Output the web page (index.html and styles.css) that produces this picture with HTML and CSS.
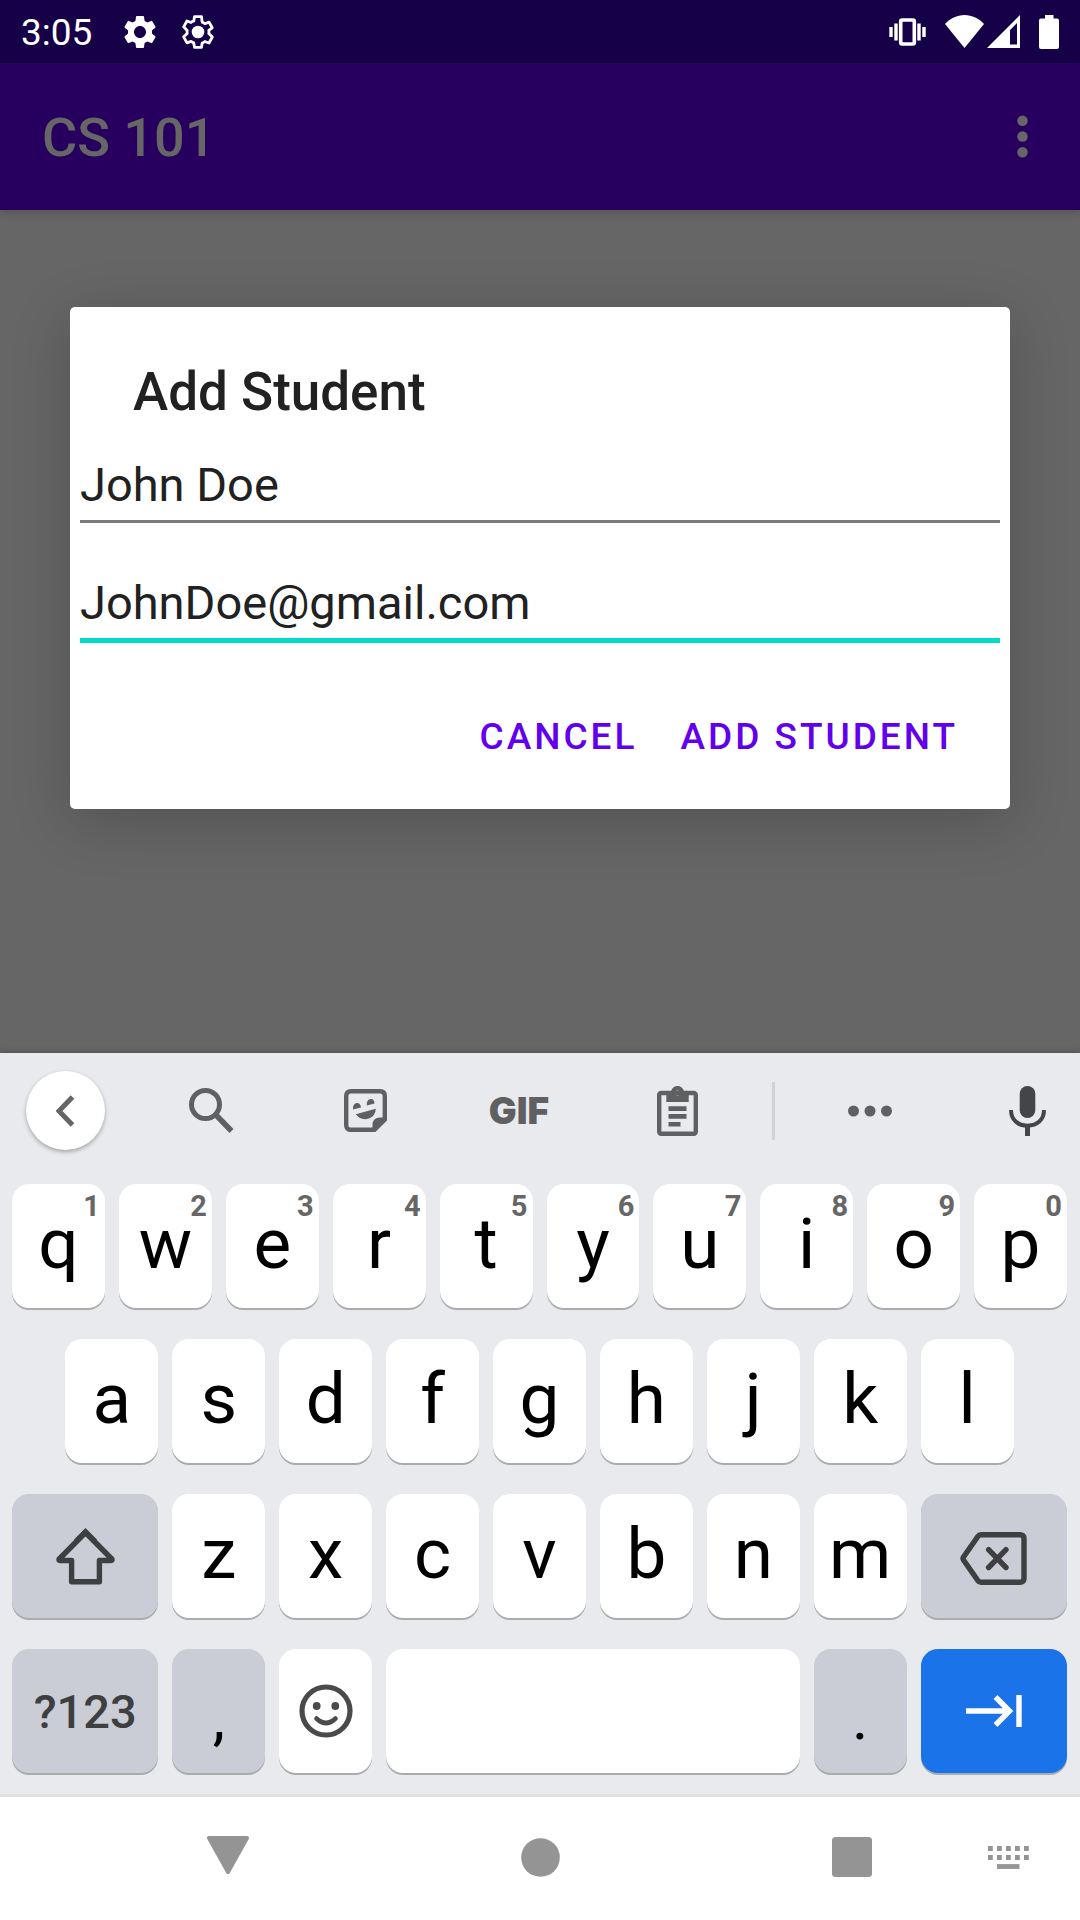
FILE: index.html
```html
<!DOCTYPE html>
<html lang="en">
<head>
<meta charset="utf-8">
<meta name="viewport" content="width=device-width, initial-scale=1">
<title>CS 101</title>
<link rel="stylesheet" href="styles.css">
</head>
<body>
<div class="status-bar">
  <span class="clock">3:05</span>
  <div class="notifications">
    <svg width="40" height="40" viewBox="0 0 24 24" aria-hidden="true"><path fill="#fff" d="M19.14,12.94c0.04-0.3,0.06-0.61,0.06-0.94c0-0.32-0.02-0.64-0.07-0.94l2.03-1.58c0.18-0.14,0.23-0.41,0.12-0.61l-1.92-3.32c-0.12-0.22-0.37-0.29-0.59-0.22l-2.39,0.96c-0.5-0.38-1.03-0.7-1.62-0.94L14.4,2.81c-0.04-0.24-0.24-0.41-0.48-0.41h-3.84c-0.24,0-0.43,0.17-0.47,0.41L9.25,5.35C8.66,5.59,8.12,5.92,7.63,6.29L5.24,5.33c-0.22-0.08-0.47,0-0.59,0.22L2.74,8.87C2.62,9.08,2.66,9.34,2.86,9.48l2.03,1.58C4.84,11.36,4.8,11.69,4.8,12s0.02,0.64,0.07,0.94l-2.03,1.58c-0.18,0.14-0.23,0.41-0.12,0.61l1.92,3.32c0.12,0.22,0.37,0.29,0.59,0.22l2.39-0.96c0.5,0.38,1.03,0.7,1.62,0.94l0.36,2.54c0.05,0.24,0.24,0.41,0.48,0.41h3.84c0.24,0,0.44-0.17,0.47-0.41l0.36-2.54c0.59-0.24,1.13-0.56,1.62-0.94l2.39,0.96c0.22,0.08,0.47,0,0.59-0.22l1.92-3.32c0.12-0.22,0.07-0.47-0.12-0.61L19.14,12.94z M12,15.6c-1.98,0-3.6-1.62-3.6-3.6s1.62-3.6,3.6-3.6s3.6,1.62,3.6,3.6S13.98,15.6,12,15.6z"/></svg>
    <svg width="40" height="40" viewBox="0 0 24 24" aria-hidden="true"><path fill="none" stroke="#fff" stroke-width="1.7" stroke-linejoin="round" d="M18.5,12.94c0.04-0.3,0.06-0.61,0.06-0.94c0-0.32-0.02-0.64-0.07-0.94l2.03-1.58l-1.9-3.4l-2.5,0.96c-0.5-0.38-1.03-0.7-1.62-0.94L14.1,2.8h-4.2L9.45,5.35C8.86,5.59,8.32,5.92,7.83,6.29L5.4,5.4L3.4,8.9l2.1,2.16C5.46,11.36,5.44,11.69,5.44,12s0.02,0.64,0.07,0.94L3.4,14.9l2,3.6l2.43-0.9c0.5,0.38,1.03,0.7,1.62,0.94L9.9,21.2h4.2l0.4-2.56c0.59-0.24,1.13-0.56,1.62-0.94l2.48,0.9l2-3.6z"/><circle cx="12" cy="12" r="3.8" fill="#fff"/></svg>
  </div>
  <div class="system-icons">
    <svg class="vibrate" width="37" height="28" viewBox="0 0 37 28" aria-hidden="true"><rect x="11.7" y="2" width="13.6" height="24" rx="1.5" fill="none" stroke="#fff" stroke-width="3.6"/><path d="M2 9v10M7 5.500v17M30 5.500v17M35 9v10" stroke="#fff" stroke-width="3.4"/></svg>
    <svg class="wifi" width="39" height="33" viewBox="0 0 39 33" aria-hidden="true"><path fill="#fff" d="M19.500 33L0 9C5 3.500 12 0 19.500 0S34 3.500 39 9z"/></svg>
    <svg class="signal" width="33" height="33" viewBox="0 0 33 33" aria-hidden="true"><path fill="#fff" fill-rule="evenodd" d="M33 0V33H0zM30 8L23 15V29.500H30z"/></svg>
    <svg width="20" height="34" viewBox="0 0 20 34" aria-hidden="true"><path fill="#fff" d="M6 0H14.500V3.500H18Q20 3.500 20 5.500V32Q20 34 18 34H2Q0 34 0 32V5.500Q0 3.500 2 3.500H6z"/></svg>
  </div>
</div>

<header class="app-bar">
  <h1 class="app-title">CS 101</h1>
  <button class="icon-button" type="button" aria-label="More options">
    <svg width="63" height="63" viewBox="0 0 24 24"><g fill="#666"><circle cx="12" cy="6" r="2"/><circle cx="12" cy="12" r="2"/><circle cx="12" cy="18" r="2"/></g></svg>
  </button>
</header>

<main class="screen">
  <form class="dialog" role="dialog" aria-labelledby="dialog-title">
    <h2 class="dialog-title" id="dialog-title">Add Student</h2>
    <div class="fields">
      <input class="field" type="text" aria-label="Name" value="John Doe">
      <input class="field field-active" type="text" aria-label="Email" value="JohnDoe@gmail.com">
    </div>
    <div class="actions">
      <button class="action" type="button">CANCEL</button>
      <button class="action" type="button">ADD STUDENT</button>
    </div>
  </form>
</main>

<section class="keyboard" aria-label="Keyboard">
  <div class="toolbar">
    <button class="tool tool-round" type="button" aria-label="Back"><svg width="19" height="32" viewBox="0 0 19 32"><path d="M16.500 2L3 16L16.500 30" fill="none" stroke="#666" stroke-width="5"/></svg></button>
    <button class="tool" type="button" aria-label="Search"><svg width="45" height="45" viewBox="0 0 45 45"><circle cx="16.500" cy="16.500" r="14" fill="none" stroke="#5f6062" stroke-width="5"/><path d="M27 27L42.500 43" stroke="#5f6062" stroke-width="5.500"/></svg></button>
    <button class="tool" type="button" aria-label="Stickers"><svg width="43" height="43" viewBox="0 0 43 43"><path d="M7 2.200H36Q40.800 2.200 40.800 7V30.500L30.500 40.800H7Q2.200 40.800 2.200 36V7Q2.200 2.200 7 2.200z" fill="none" stroke="#5f6062" stroke-width="4.400"/><path d="M28.500 42V36Q28.500 28.500 36 28.500H42V31L31 42z" fill="#5f6062"/><path d="M9 20.500Q8.500 15 12.500 14Q16.500 13.500 17 18.500zM22.800 16.500Q22.300 11 26.300 10Q30.300 9.500 30.500 14.500zM11.700 25.300L31.800 19.700Q31.500 27 25 29.500Q17 32 11.700 25.300z" fill="#5f6062"/></svg></button>
    <button class="tool tool-gif" type="button">GIF</button>
    <button class="tool" type="button" aria-label="Clipboard"><svg width="41" height="50" viewBox="0 0 41 50"><rect x="2.200" y="7" width="36.600" height="40.800" rx="2" fill="none" stroke="#5f6062" stroke-width="4.400"/><path fill="#5f6062" fill-rule="evenodd" d="M9.300 5H14Q16 0 20.500 0T27 5H31.700V16H9.300zM20.500 4.500a2.500 2.500 0 1 0 .01 0z"/><path d="M11.500 22.600H29.500M11.500 30.400H29.500M11.500 38.200H23.500" stroke="#5f6062" stroke-width="4.600"/></svg></button>
    <span class="tool-divider"></span>
    <button class="tool" type="button" aria-label="More"><svg width="44" height="12" viewBox="0 0 44 12"><g fill="#5f6062"><circle cx="5.500" cy="6" r="5.500"/><circle cx="22" cy="6" r="5.500"/><circle cx="38.500" cy="6" r="5.500"/></g></svg></button>
    <button class="tool tool-mic" type="button" aria-label="Voice input"><svg width="37" height="50" viewBox="0 0 37 50"><rect x="10.700" y="0" width="15.600" height="32" rx="7.800" fill="#444547"/><path d="M2 24C2 34 9 39.700 18.500 39.700S35 34 35 24" fill="none" stroke="#444547" stroke-width="4"/><path d="M18.500 39V50" stroke="#444547" stroke-width="5"/></svg></button>
  </div>

  <div class="keys">
    <button class="key" type="button">q<span class="hint">1</span></button>
    <button class="key" type="button">w<span class="hint">2</span></button>
    <button class="key" type="button">e<span class="hint">3</span></button>
    <button class="key" type="button">r<span class="hint">4</span></button>
    <button class="key" type="button">t<span class="hint">5</span></button>
    <button class="key" type="button">y<span class="hint">6</span></button>
    <button class="key" type="button">u<span class="hint">7</span></button>
    <button class="key" type="button">i<span class="hint">8</span></button>
    <button class="key" type="button">o<span class="hint">9</span></button>
    <button class="key" type="button">p<span class="hint">0</span></button>

    <button class="key key-indent" type="button">a</button>
    <button class="key" type="button">s</button>
    <button class="key" type="button">d</button>
    <button class="key" type="button">f</button>
    <button class="key" type="button">g</button>
    <button class="key" type="button">h</button>
    <button class="key" type="button">j</button>
    <button class="key" type="button">k</button>
    <button class="key" type="button">l</button>

    <button class="key key-wide key-gray key-icon key-shift" type="button" aria-label="Shift"><svg width="59" height="57" viewBox="0 0 59 57"><g fill="none" stroke="#3e3f41" stroke-width="5.400"><path stroke-linejoin="round" d="M29.500 4.500L3.200 31Q2.500 32.500 4 32.500H15.600V53.800H43.400V32.500H55Q56.500 32.500 55.800 31z"/><path d="M20 13.500L29.500 3.900L39 13.500"/></g></svg></button>
    <button class="key" type="button">z</button>
    <button class="key" type="button">x</button>
    <button class="key" type="button">c</button>
    <button class="key" type="button">v</button>
    <button class="key" type="button">b</button>
    <button class="key" type="button">n</button>
    <button class="key" type="button">m</button>
    <button class="key key-wide key-gray key-icon" type="button" aria-label="Backspace"><svg width="67" height="57" viewBox="0 -4 67 57"><g fill="none" stroke="#3e3f41" stroke-width="5.400"><path d="M21 2.700H60Q64 2.700 64 6.700V46.300Q64 50.300 60 50.300H21Q19 50.300 18 48.800L3.500 28Q2.500 26.500 3.500 25L18 4.200Q19 2.700 21 2.700z"/><path stroke-linecap="round" d="M28.600 17.700L46 35.500M46 17.700L28.600 35.500"/></g></svg></button>

    <button class="key key-wide key-gray key-symbols" type="button">?123</button>
    <button class="key key-gray key-mark" type="button">,</button>
    <button class="key key-icon" type="button" aria-label="Emoji"><svg width="54" height="54" viewBox="0 0 54 54"><circle cx="27" cy="27" r="24" fill="none" stroke="#4a4a4a" stroke-width="5.200"/><circle cx="17.700" cy="22" r="3.900" fill="#4a4a4a"/><circle cx="36.300" cy="22" r="3.900" fill="#4a4a4a"/><path d="M17.500 34.500Q27 43.500 36.500 34.500" fill="none" stroke="#4a4a4a" stroke-width="4.600" stroke-linecap="round"/></svg></button>
    <button class="key key-space" type="button" aria-label="Space"></button>
    <button class="key key-gray key-mark" type="button">.</button>
    <button class="key key-wide key-blue key-icon" type="button" aria-label="Next"><svg width="56" height="32" viewBox="0 0 56 32"><path d="M0 16H43M29.500 2L43.500 16L29.500 30M53 0V32" fill="none" stroke="#fff" stroke-width="5.400"/></svg></button>
  </div>
</section>

<nav class="nav-bar">
  <button class="nav-button nav-back" type="button" aria-label="Back"><svg width="42" height="38" viewBox="0 0 42 38"><path d="M2 2H40L21 36z" fill="#949494" stroke="#949494" stroke-width="4" stroke-linejoin="round"/></svg></button>
  <button class="nav-button" type="button" aria-label="Home"><svg width="39" height="39" viewBox="0 0 39 39"><circle cx="19.500" cy="19.500" r="19.300" fill="#949494"/></svg></button>
  <button class="nav-button" type="button" aria-label="Overview"><svg width="40" height="40" viewBox="0 0 40 40"><rect width="40" height="40" rx="3.500" fill="#949494"/></svg></button>
  <button class="nav-button" type="button" aria-label="Switch keyboard"><svg width="41" height="23" viewBox="0 0 41 23"><path d="M0 2.500H41M0 11.500H41" stroke="#949494" stroke-width="4.800" stroke-dasharray="4.800 4.200"/><path d="M9 20.500H31.500" stroke="#949494" stroke-width="4.800"/></svg></button>
</nav>
</body>
</html>
```
FILE: styles.css
```css
* {
  box-sizing: border-box;
}

body {
  margin: 0;
  min-height: 100vh;
  display: flex;
  flex-direction: column;
  background: #666;
  font-family: Roboto, "Liberation Sans", sans-serif;
}

button {
  margin: 0;
  padding: 0;
  border: 0;
  background: none;
  color: inherit;
  font: inherit;
}

svg {
  display: block;
  flex: none;
}

/* Status bar */

.status-bar {
  display: flex;
  align-items: center;
  height: 63px;
  padding: 0 21px;
  background: #160048;
  color: #fff;
}

.clock {
  padding-top: 3px;
  font-size: 37px;
  line-height: 44px;
}

.notifications {
  display: flex;
  gap: 18px;
  margin-left: 28px;
}

.system-icons {
  display: flex;
  align-items: center;
  margin-left: auto;
}

.vibrate,
.signal {
  margin-right: 19px;
}

.wifi {
  margin-right: 3px;
}

/* App bar */

.app-bar {
  display: flex;
  align-items: center;
  justify-content: space-between;
  height: 147px;
  padding: 0 26px 0 42px;
  background: #27005f;
  color: #666;
  box-shadow: 0 2px 10px rgba(0, 0, 0, 0.2);
}

.app-title {
  margin: 0;
  padding-top: 3px;
  font-size: 54px;
  font-weight: 500;
  line-height: 62px;
}

/* Dialog */

.screen {
  flex: 1;
  display: flex;
  flex-direction: column;
  justify-content: center;
  padding: 0 70px 147px;
}

.dialog {
  padding: 54px 0 26px;
  border-radius: 5px;
  background: #fff;
  box-shadow: 0 12px 60px rgba(0, 0, 0, 0.2);
}

.dialog-title {
  margin: 0;
  padding: 0 63px;
  color: #212121;
  font-size: 53px;
  font-weight: 500;
  line-height: 62px;
}

.fields {
  display: flex;
  flex-direction: column;
  gap: 52px;
  padding: 34px 10px 46px;
}

.field {
  width: 100%;
  height: 66px;
  padding: 0 0 9px;
  border: 0;
  border-bottom: 3px solid #7b7b7b;
  border-radius: 0;
  outline: 0;
  background: none;
  color: #212121;
  font-family: inherit;
  font-size: 47px;
  line-height: 54px;
}

.field-active {
  height: 68px;
  border-bottom: 5px solid #03dac9;
}

.actions {
  display: flex;
  justify-content: flex-end;
  gap: 1px;
  padding-right: 31px;
}

.action {
  height: 94px;
  padding: 0 21px;
  color: #6200ee;
  font-size: 37px;
  font-weight: 500;
  letter-spacing: 3px;
}

/* Keyboard */

.keyboard {
  background: #e8eaed;
  box-shadow: 0 0 6px rgba(0, 0, 0, 0.3);
}

.toolbar {
  display: grid;
  grid-template-columns: 131fr 160fr 149fr 158fr 159fr 32fr 162fr 129fr;
  align-items: center;
  justify-items: center;
  height: 115px;
}

.tool {
  display: flex;
  align-items: center;
  justify-content: center;
  height: 79px;
  min-width: 79px;
}

.tool-round {
  border-radius: 50%;
  background: #fff;
  box-shadow: 0 2px 4px rgba(0, 0, 0, 0.3);
}

.tool-gif {
  color: #5f6062;
  font-family: Inter, sans-serif;
  font-size: 37px;
  font-weight: 900;
}

.tool-divider {
  width: 3px;
  height: 58px;
  background: #d0d2d5;
}

.tool-mic {
  justify-self: end;
  margin-right: 13px;
}

.keys {
  display: grid;
  grid-template-columns: repeat(20, minmax(0, 1fr));
  grid-auto-rows: 124px;
  gap: 31px 14px;
  padding: 16px 13px 21px 12px;
}

.key {
  position: relative;
  grid-column: span 2;
  display: flex;
  align-items: center;
  justify-content: center;
  padding-bottom: 6px;
  border-radius: 17px;
  background: #fff;
  box-shadow: 0 2px 0 #a9abad;
  color: #000;
  font-size: 71px;
}

.key-indent {
  grid-column: 2 / span 2;
}

.key-wide {
  grid-column: span 3;
}

.keys .key-shift {
  grid-column: 1 / span 3;
}

.key-space {
  grid-column: span 8;
}

.key-gray {
  background: #cbcdd6;
}

.key-blue {
  background: #1a73e8;
}

.key-icon {
  padding: 0;
}

.key-symbols {
  padding: 0;
  color: #3e3f41;
  font-size: 47px;
  font-weight: 500;
}

.key-mark {
  padding: 12px 0 0;
  font-size: 62px;
}

.hint {
  position: absolute;
  top: 5px;
  right: 5px;
  color: #666;
  font-size: 29px;
  font-weight: 700;
  line-height: 34px;
}

/* Navigation bar */

.nav-bar {
  display: grid;
  grid-template-columns: 6fr 7fr 19fr 7fr 6fr;
  height: 126px;
  border-top: 3px solid #dfe1e0;
  background: #fff;
}

.nav-button {
  display: flex;
  align-items: center;
  justify-content: center;
  padding-bottom: 3px;
}

.nav-back {
  grid-column: 2;
  padding-bottom: 8px;
}
```
